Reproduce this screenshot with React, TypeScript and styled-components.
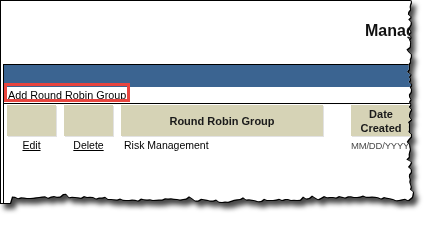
import React from 'react';
import styled, { createGlobalStyle } from 'styled-components';

const GlobalStyle = createGlobalStyle`
  body {
    margin: 0;
    background: #fff;
    font-family: 'Liberation Sans', Arial, sans-serif;
  }
`;

// ragged right and bottom edge of the torn screenshot
function tornEdge(): string {
  let seed = 23;
  const rand = () => {
    seed = (seed * 9301 + 49297) % 233280;
    return seed / 233280;
  };
  const pts: string[] = ['0px 0px', '410px 0px'];
  for (let y = 2; y <= 190; y += 2.5) {
    const notch = rand() > 0.85 ? 2 : 0;
    pts.push(`${(409.5 + rand() * 3.4 - 1.7 - notch).toFixed(1)}px ${y}px`);
  }
  pts.push('413px 192px', '412px 197px');
  let wave = 0;
  for (let x = 408; x >= 12; x -= 3) {
    wave += (rand() - 0.5) * 1.8;
    wave = Math.max(-3, Math.min(3, wave));
    const spike = rand() > 0.88 ? -2 : 0;
    pts.push(`${x}px ${(199.5 + wave + spike + rand() * 1.4 - 0.7).toFixed(1)}px`);
  }
  pts.push('10px 203px', '0px 203px');
  return `polygon(${pts.join(', ')})`;
}

const EDGE = tornEdge();

const Stage = styled.div`
  width: 431px;
  height: 221px;
  overflow: hidden;
  background: #fff;
`;

const ShadowWrap = styled.div`
  width: 416px;
  height: 206px;
  filter: drop-shadow(1px 0 0 #000) drop-shadow(0 1px 0 #000) drop-shadow(4px 5px 2.5px rgba(0, 0, 0, 0.72));
`;

const Sheet = styled.div`
  width: 100%;
  height: 100%;
  box-sizing: border-box;
  display: flex;
  flex-direction: column;
  background: #fff;
  border-left: 1px solid #000;
  border-top: 1px solid #000;
  clip-path: ${EDGE};
  overflow: hidden;
`;

const TitleBar = styled.div`
  height: 63px;
  box-sizing: border-box;
  padding: 21px 0 0 364px;
  font-size: 16px;
  font-weight: bold;
  line-height: 18px;
  color: #111;
  white-space: nowrap;
`;

const Frame = styled.div`
  flex: 1;
  margin-left: 2px;
  border-left: 1px solid #000;
  border-top: 1px solid #000;
`;

const BlueBar = styled.div`
  height: 22px;
  background: #3b6491;
`;

const Toolbar = styled.div`
  position: relative;
  height: 16px;
  padding-left: 4px;
  border-bottom: 1px solid #000;
  font-size: 10.8px;
  line-height: 16px;
`;

const Callout = styled.div`
  position: absolute;
  left: 0;
  top: -4px;
  width: 126px;
  height: 19px;
  box-sizing: border-box;
  border: 3px solid #e8453f;
`;

const Link = styled.a`
  color: #000;
  text-decoration: underline;
  cursor: pointer;
`;

const Grid = styled.div`
  display: grid;
  grid-template-columns: 49px 49px 202px 12px 60px;
  grid-template-rows: 31px 14px;
  column-gap: 8px;
  row-gap: 2px;
  margin-top: 1px;
  padding-left: 3px;
`;

const HeadCell = styled.div<{ $blank?: boolean }>`
  display: flex;
  align-items: center;
  justify-content: center;
  text-align: center;
  background: ${(p) => (p.$blank ? 'transparent' : '#d6d3b6')};
  box-shadow: ${(p) => (p.$blank ? 'none' : '1px 1px 0 #e2e2e2')};
  font-size: 11px;
  font-weight: bold;
  line-height: 14px;
  color: #1a1a1a;
`;

const Cell = styled.div<{ $align?: 'left' | 'center' }>`
  text-align: ${(p) => p.$align ?? 'left'};
  padding-left: ${(p) => (p.$align === 'center' ? 0 : 3)}px;
  font-size: 10.5px;
  line-height: 14px;
  color: #000;
  white-space: nowrap;
`;

const DateCell = styled.div`
  font-size: 9.5px;
  line-height: 15px;
  letter-spacing: -0.2px;
  color: #4a4a4a;
  white-space: nowrap;
`;

export default function App() {
  return (
    <Stage>
      <GlobalStyle />
      <ShadowWrap>
        <Sheet>
          <TitleBar>Manage Round Robin Groups</TitleBar>
          <Frame>
            <BlueBar />
            <Toolbar>
              <Link>Add Round Robin Group</Link>
              <Callout />
            </Toolbar>
            <Grid>
              <HeadCell />
              <HeadCell />
              <HeadCell>Round Robin Group</HeadCell>
              <HeadCell $blank />
              <HeadCell>Date Created</HeadCell>

              <Cell $align="center">
                <Link>Edit</Link>
              </Cell>
              <Cell $align="center">
                <Link>Delete</Link>
              </Cell>
              <Cell>Risk Management</Cell>
              <Cell />
              <DateCell>MM/DD/YYYY</DateCell>
            </Grid>
          </Frame>
        </Sheet>
      </ShadowWrap>
    </Stage>
  );
}
